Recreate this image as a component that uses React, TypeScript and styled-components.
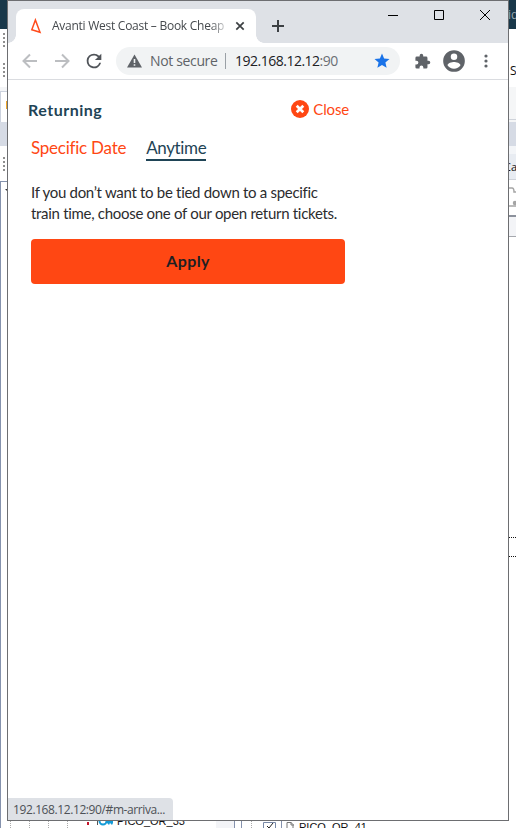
import React from 'react';
import styled, { createGlobalStyle } from 'styled-components';

const Global = createGlobalStyle`
  * { box-sizing: border-box; }
  html, body { margin: 0; padding: 0; overflow: hidden; background: #fff; }
  button { border: 0; padding: 0; margin: 0; background: none; font: inherit; color: inherit; }
  svg { display: block; flex: none; }
`;

const Desktop = styled.div`
  width: 516px;
  height: 828px;
  display: grid;
  grid-template-columns: 7px 502px 7px;
  grid-template-rows: 821px 7px;
  overflow: hidden;
  background: #fff;
  font-family: 'Open Sans', 'Noto Sans', sans-serif;
`;

const Strip = styled.div`
  display: flex;
  flex-direction: column;
  overflow: hidden;
`;

const Band = styled.div<{ $h: number; $bg?: string }>`
  flex: none;
  height: ${(p) => p.$h}px;
  background: ${(p) => p.$bg ?? '#fff'};
  overflow: hidden;
`;

const Grip = styled.div<{ $top: number; $h: number }>`
  flex: none;
  height: ${(p) => p.$h}px;
  padding: ${(p) => p.$top}px 0 0 3px;
  display: flex;
  flex-direction: column;
  gap: 2px;
  i { flex: none; width: 2px; height: 2px; background: #8f8f8f; }
`;

const TabEdge = styled.div`
  flex: none;
  height: 30px;
  border-left: 1px solid #ccd2de;
  display: flex;
  justify-content: flex-end;
  align-items: center;
  i { width: 1px; height: 8px; background: #f0a82c; margin-bottom: 4px; }
`;

const TreeEdge = styled.div`
  flex: 1;
  border-left: 1px solid #8592ad;
  border-top: 1px solid #8592ad;
  padding: 7px 0 0 3px;
`;

const ClippedText = styled.div<{ $h: number; $size: number; $color: string; $bg: string; $pull?: number }>`
  flex: none;
  height: ${(p) => p.$h}px;
  line-height: ${(p) => p.$h}px;
  font-size: ${(p) => p.$size}px;
  color: ${(p) => p.$color};
  background: ${(p) => p.$bg};
  text-indent: ${(p) => p.$pull ?? 0}px;
  overflow: hidden;
  white-space: nowrap;
`;

const DottedRule = styled.div`
  flex: none;
  height: 1px;
  background: repeating-linear-gradient(90deg, #111 0 1px, #fff 1px 2px);
`;

const Window = styled.section`
  position: relative;
  border: 1px solid #6d6e71;
  background: #fff;
  display: flex;
  flex-direction: column;
`;

const TitleBar = styled.header`
  height: 42px;
  flex: none;
  background: #dee1e6;
  display: flex;
  align-items: flex-start;
`;

const TabShape = styled.div`
  margin: 8px 0 0 8px;
  width: 240px;
  height: 34px;
  flex: none;
  border-radius: 8px 8px 0 0;
  background: #fff;
  display: flex;
  align-items: center;
  padding-left: 13px;
  position: relative;
  &::before, &::after {
    content: '';
    position: absolute;
    bottom: 0;
    width: 8px;
    height: 8px;
  }
  &::before { left: -8px; background: radial-gradient(circle at 0 0, transparent 7.5px, #fff 8px); }
  &::after { right: -8px; background: radial-gradient(circle at 100% 0, transparent 7.5px, #fff 8px); }
`;

const TabTitle = styled.span`
  width: 175px;
  margin: 0 8px 0 9px;
  flex: none;
  overflow: hidden;
  white-space: nowrap;
  font-size: 12px;
  letter-spacing: -0.26px;
  line-height: 18px;
  color: #45494d;
  mask-image: linear-gradient(90deg, #000 158px, transparent 178px);
`;

const IconButton = styled.button<{ $w: number; $h: number }>`
  flex: none;
  width: ${(p) => p.$w}px;
  height: ${(p) => p.$h}px;
  display: flex;
  align-items: center;
  justify-content: center;
`;

const WindowControls = styled.div`
  margin-left: auto;
  display: flex;
`;

const Toolbar = styled.div`
  height: 37px;
  flex: none;
  border-bottom: 1px solid #dadce0;
  display: flex;
  align-items: center;
  padding-left: 6px;
  background: #fff;
`;

const ToolbarActions = styled.div`
  display: flex;
  margin-left: 6px;
`;

const Omnibox = styled.div`
  width: 284px;
  height: 28px;
  margin-left: 6px;
  flex: none;
  border-radius: 14px;
  background: #f1f3f4;
  display: flex;
  align-items: center;
  padding-left: 11px;
  font-size: 14px;
  line-height: 26px;
  white-space: nowrap;
`;

const Security = styled.span`
  width: 75px;
  flex: none;
  margin: -1px 0 0 8px;
  color: #5f6368;
  letter-spacing: -0.35px;
`;

const Divider = styled.i`
  width: 1px;
  height: 16px;
  flex: none;
  background: #9aa0a6;
`;

const Address = styled.span`
  width: 138px;
  margin: -1px 0 0 9px;
  flex: none;
  color: #202124;
  letter-spacing: -0.5px;
  em { font-style: normal; color: #6b6f74; }
`;

const Page = styled.main`
  width: 341px;
  padding: 19px 0 0 20px;
  font-family: Lato, sans-serif;
  color: #2c2c2e;
`;

const PanelHead = styled.div`
  height: 22px;
  display: flex;
  justify-content: space-between;
  align-items: center;
`;

const Heading = styled.h1`
  margin: 0;
  font-size: 16px;
  font-weight: 700;
  line-height: 22px;
  letter-spacing: 0.5px;
  color: #1f4456;
`;

const CloseLink = styled.button`
  display: flex;
  align-items: center;
  gap: 4px;
  font-size: 15px;
  line-height: 20px;
  letter-spacing: -0.15px;
  color: #ff4713;
  margin-top: -2px;
`;

const Tabs = styled.nav`
  margin: 16px 0 0 3px;
  display: flex;
  gap: 20px;
`;

const TabLink = styled.button<{ $active?: boolean }>`
  height: 24px;
  font-size: 17px;
  line-height: 22px;
  display: flex;
  white-space: nowrap;
  letter-spacing: ${(p) => (p.$active ? '-0.37px' : '-0.24px')};
  color: ${(p) => (p.$active ? '#1f4456' : '#ff4713')};
  border-bottom: 2px solid ${(p) => (p.$active ? '#1f4456' : 'transparent')};
`;

const Copy = styled.p`
  margin: 21px 0 0 3px;
  width: 314px;
  font-size: 15px;
  line-height: 21px;
  letter-spacing: -0.3px;
  white-space: nowrap;
`;

const Apply = styled.button`
  display: block;
  margin: 15px 0 0 3px;
  padding-bottom: 2px;
  width: 314px;
  height: 45px;
  border-radius: 4px;
  background: #ff4713;
  color: #1f1f22;
  font-size: 16px;
  font-weight: 700;
  letter-spacing: 0.4px;
`;

const StatusBubble = styled.div`
  position: absolute;
  left: 0;
  bottom: 0;
  width: 165px;
  height: 22px;
  border-radius: 0 4px 0 0;
  background: #dee1e6;
  padding-left: 5px;
  font-size: 12px;
  line-height: 23px;
  letter-spacing: -0.4px;
  color: #4d5156;
  white-space: nowrap;
`;

const BottomStrip = styled.div`
  grid-column: 1 / -1;
  height: 7px;
  display: flex;
  overflow: hidden;
  font-family: 'Liberation Sans', sans-serif;
  font-size: 11px;
  color: #111;
`;

const TreeCell = styled.div<{ $w: number; $edge?: boolean; $bg?: string }>`
  flex: none;
  width: ${(p) => p.$w}px;
  height: 7px;
  background: ${(p) => p.$bg ?? '#fff'};
  border-left: ${(p) => (p.$edge ? '1px solid #8592ad' : '0')};
`;

const Guide = styled.div<{ $w: number }>`
  flex: none;
  width: ${(p) => p.$w}px;
  height: 7px;
  border-left: 1px dotted #aaa;
`;

const TreeLabel = styled.span<{ $w: number; $line: number }>`
  flex: none;
  width: ${(p) => p.$w}px;
  height: 7px;
  line-height: ${(p) => p.$line}px;
  overflow: hidden;
  white-space: nowrap;
`;

const Dots = ({ top, h }: { top: number; h: number }) => (
  <Grip $top={top} $h={h}><i /><i /><i /><i /></Grip>
);

const Arrow = ({ flip }: { flip?: boolean }) => (
  <svg width="16" height="16" viewBox="0 0 16 16" fill="none" stroke="#bcbec1" strokeWidth="2">
    <path d={flip ? 'M1 8h13M8 1.5 14.5 8 8 14.5' : 'M15 8H2M8 1.5 1.5 8 8 14.5'} />
  </svg>
);

const PuzzleIcon = () => (
  <svg width="17" height="17" viewBox="0 0 24 24" fill="#5f6368">
    <path d="M20.5 11H19V7a2 2 0 0 0-2-2h-4V3.5a2.500 2.500 0 0 0-5 0V5H4a2 2 0 0 0-2 2v3.800h1.500a2.700 2.700 0 0 1 0 5.400H2V20a2 2 0 0 0 2 2h3.800v-1.500a2.700 2.700 0 0 1 5.400 0V22H17a2 2 0 0 0 2-2v-4h1.500a2.500 2.500 0 0 0 0-5z" />
  </svg>
);

export default function App() {
  return (
    <>
      <Global />
      <Desktop>
        <Strip>
          <Band $h={29} $bg="#19384a" />
          <Dots top={4} h={30} />
          <Dots top={4} h={28} />
          <Band $h={4} $bg="#f4f5f7" />
          <Band $h={1} $bg="#ccd2de" />
          <TabEdge><i /></TabEdge>
          <Band $h={24} $bg="#d6dbe5" />
          <Dots top={11} h={35} />
          <TreeEdge>
            <svg width="3" height="3" viewBox="0 0 3 3"><path d="M1 0h2v2z" fill="#333" /></svg>
          </TreeEdge>
        </Strip>

        <Window>
          <TitleBar>
            <TabShape>
              <svg width="14" height="16" viewBox="0 0 14 16" fill="none" stroke="#ff4b1c" strokeWidth="1.5">
                <path d="M6.400 2 2.800 11.700 11 14.300 6.400 2Z" />
              </svg>
              <TabTitle>Avanti West Coast – Book Cheap</TabTitle>
              <svg width="10" height="10" viewBox="0 0 10 10" stroke="#3c4043" strokeWidth="1.7">
                <path d="M1.3 1.3 8.7 8.7M8.7 1.3 1.3 8.7" />
              </svg>
            </TabShape>
            <IconButton $w={44} $h={50} aria-label="New tab">
              <svg width="12" height="12" viewBox="0 0 12 12" fill="#3c4043"><path d="M5 0h2v5h5v2H7v5H5V7H0V5h5z" /></svg>
            </IconButton>
            <WindowControls>
              <IconButton $w={46} $h={28} aria-label="Minimise">
                <svg width="10" height="10" viewBox="0 0 10 10"><path d="M0 5h10v1H0z" /></svg>
              </IconButton>
              <IconButton $w={46} $h={28} aria-label="Maximise">
                <svg width="10" height="10" viewBox="0 0 10 10" fill="none" stroke="#000"><path d="M.5.5h9v9h-9z" /></svg>
              </IconButton>
              <IconButton $w={46} $h={28} aria-label="Close window">
                <svg width="10" height="10" viewBox="0 0 10 10" stroke="#000"><path d="M0 0 10 10M10 0 0 10" /></svg>
              </IconButton>
            </WindowControls>
          </TitleBar>

          <Toolbar>
            <IconButton $w={32} $h={32} aria-label="Back"><Arrow /></IconButton>
            <IconButton $w={32} $h={32} aria-label="Forward"><Arrow flip /></IconButton>
            <IconButton $w={32} $h={32} aria-label="Reload">
              <svg width="22" height="22" viewBox="0 0 24 24" fill="#505459">
                <path d="M17.65 6.35A7.95 7.95 0 0 0 12 4a8 8 0 1 0 7.73 10h-2.08A6 6 0 1 1 12 6c1.66 0 3.14.69 4.22 1.78L13 11h7V4z" />
              </svg>
            </IconButton>
            <Omnibox>
              <svg width="15" height="14" viewBox="0 0 15 14">
                <path d="M7.5.5 15 13.5H0z" fill="#5f6368" />
                <path d="M6.7 5h1.6v4H6.7zM6.7 10.2h1.6v1.6H6.7z" fill="#f1f3f4" />
              </svg>
              <Security>Not secure</Security>
              <Divider />
              <Address>192.168.12.12<em>:90</em></Address>
              <svg width="18" height="18" viewBox="0 0 24 24" fill="#1a73e8">
                <path d="M12 17.27 18.18 21l-1.64-7.03L22 9.24l-7.19-.61L12 2 9.19 8.63 2 9.24l5.46 4.73L5.82 21z" />
              </svg>
            </Omnibox>
            <ToolbarActions>
              <IconButton $w={32} $h={32} aria-label="Extensions"><PuzzleIcon /></IconButton>
              <IconButton $w={32} $h={32} aria-label="Profile">
                <svg width="26" height="26" viewBox="0 0 24 24" fill="#5f6368">
                  <path d="M12 2a10 10 0 1 0 0 20 10 10 0 0 0 0-20zm0 3a3 3 0 1 1 0 6 3 3 0 0 1 0-6zm0 14.2A7.2 7.2 0 0 1 6 16c.03-2 4-3.1 6-3.1s5.970 1.100 6 3.100a7.200 7.200 0 0 1-6 3.200z" />
                </svg>
              </IconButton>
              <IconButton $w={32} $h={32} aria-label="Menu">
                <svg width="4" height="14" viewBox="0 0 4 14" fill="#5f6368">
                  <circle cx="2" cy="2" r="1.6" /><circle cx="2" cy="7" r="1.6" /><circle cx="2" cy="12" r="1.6" />
                </svg>
              </IconButton>
            </ToolbarActions>
          </Toolbar>

          <Page>
            <PanelHead>
              <Heading>Returning</Heading>
              <CloseLink>
                <svg width="18" height="18" viewBox="0 0 18 18">
                  <circle cx="9" cy="9" r="9" fill="#ff4713" />
                  <path d="M5.7 5.7l6.600 6.600M12.300 5.700l-6.600 6.600" stroke="#fff" strokeWidth="2.7" />
                </svg>
                Close
              </CloseLink>
            </PanelHead>
            <Tabs>
              <TabLink>Specific Date</TabLink>
              <TabLink $active>Anytime</TabLink>
            </Tabs>
            <Copy>
              If you don’t want to be tied down to a specific
              <br />
              train time, choose one of our open return tickets.
            </Copy>
            <Apply>Apply</Apply>
          </Page>

          <StatusBubble>192.168.12.12:90/#m-arriva...</StatusBubble>
        </Window>

        <Strip>
          <ClippedText $h={29} $size={12} $color="#9aa9b3" $bg="#19384a" $pull={-1}>id</ClippedText>
          <Band $h={25} />
          <ClippedText $h={33} $size={12} $color="#111" $bg="#fff" $pull={1}>S</ClippedText>
          <Band $h={32} $bg="#f5f6f7" />
          <Band $h={1} $bg="#cfd3da" />
          <Band $h={2} $bg="#f5f6f7" />
          <Band $h={24} $bg="#d6dbe5" />
          <Band $h={8} $bg="#f3f5f8" />
          <ClippedText $h={25} $size={11} $color="#111" $bg="#e8ecf2" $pull={-5}>Ca</ClippedText>
          <Band $h={1} $bg="#cfd3da" />
          <Band $h={35}>
            <svg width="7" height="35" viewBox="0 0 7 35" fill="none" stroke="#a5a5a5" strokeWidth="1.5">
              <path d="M0 8h3q2 0 2 4h2M0 26h7" /><circle cx="6" cy="23" r="1.5" fill="#a5a5a5" />
            </svg>
          </Band>
          <Band $h={2} $bg="#8c919c" />
          <Band $h={19} $bg="#f3f4f7" />
          <Band $h={1} $bg="#a5a8ae" />
          <Band $h={300} />
          <DottedRule />
          <Band $h={18} />
          <DottedRule />
        </Strip>

        <BottomStrip>
          <TreeCell $w={10} $edge />
          <Guide $w={19} /><Guide $w={19} /><Guide $w={19} /><Guide $w={19} />
          <TreeCell $w={11}>
            <svg width="4" height="5" viewBox="0 0 4 5"><path d="M1 1h2v3H1z" fill="#c3152b" /></svg>
          </TreeCell>
          <TreeCell $w={20}>
            <svg width="17" height="5" viewBox="0 0 17 5">
              <path d="M.5 0v4" stroke="#555" /><circle cx="6" cy="0" r="3.5" fill="none" stroke="#149bd7" strokeWidth="2" />
              <path d="M9 0h7v2l-1 2-2-2-1 2-2-2H9z" fill="#149bd7" />
            </svg>
          </TreeCell>
          <TreeLabel $w={99} $line={-0}>PICO_OR_33</TreeLabel>
          <TreeCell $w={18} $bg="#f3f4f7" />
          <TreeCell $w={7} $edge />
          <TreeCell $w={10} $edge />
          <Guide $w={12} />
          <TreeCell $w={18}>
            <svg width="16" height="7" viewBox="0 0 16 7" fill="none"><path d="M.5 7V1.5h12V7" stroke="#7888a6" /><path d="m4 5 2 2 4-5" stroke="#222" /></svg>
          </TreeCell>
          <TreeCell $w={18} $edge>
            <svg width="16" height="7" viewBox="0 0 16 7" fill="none" stroke="#777"><path d="M5 7V1.5h4l2 2V7M9 1v3h3" /></svg>
          </TreeCell>
          <TreeLabel $w={90} $line={12}>PICO_OR_41</TreeLabel>
        </BottomStrip>
      </Desktop>
    </>
  );
}
